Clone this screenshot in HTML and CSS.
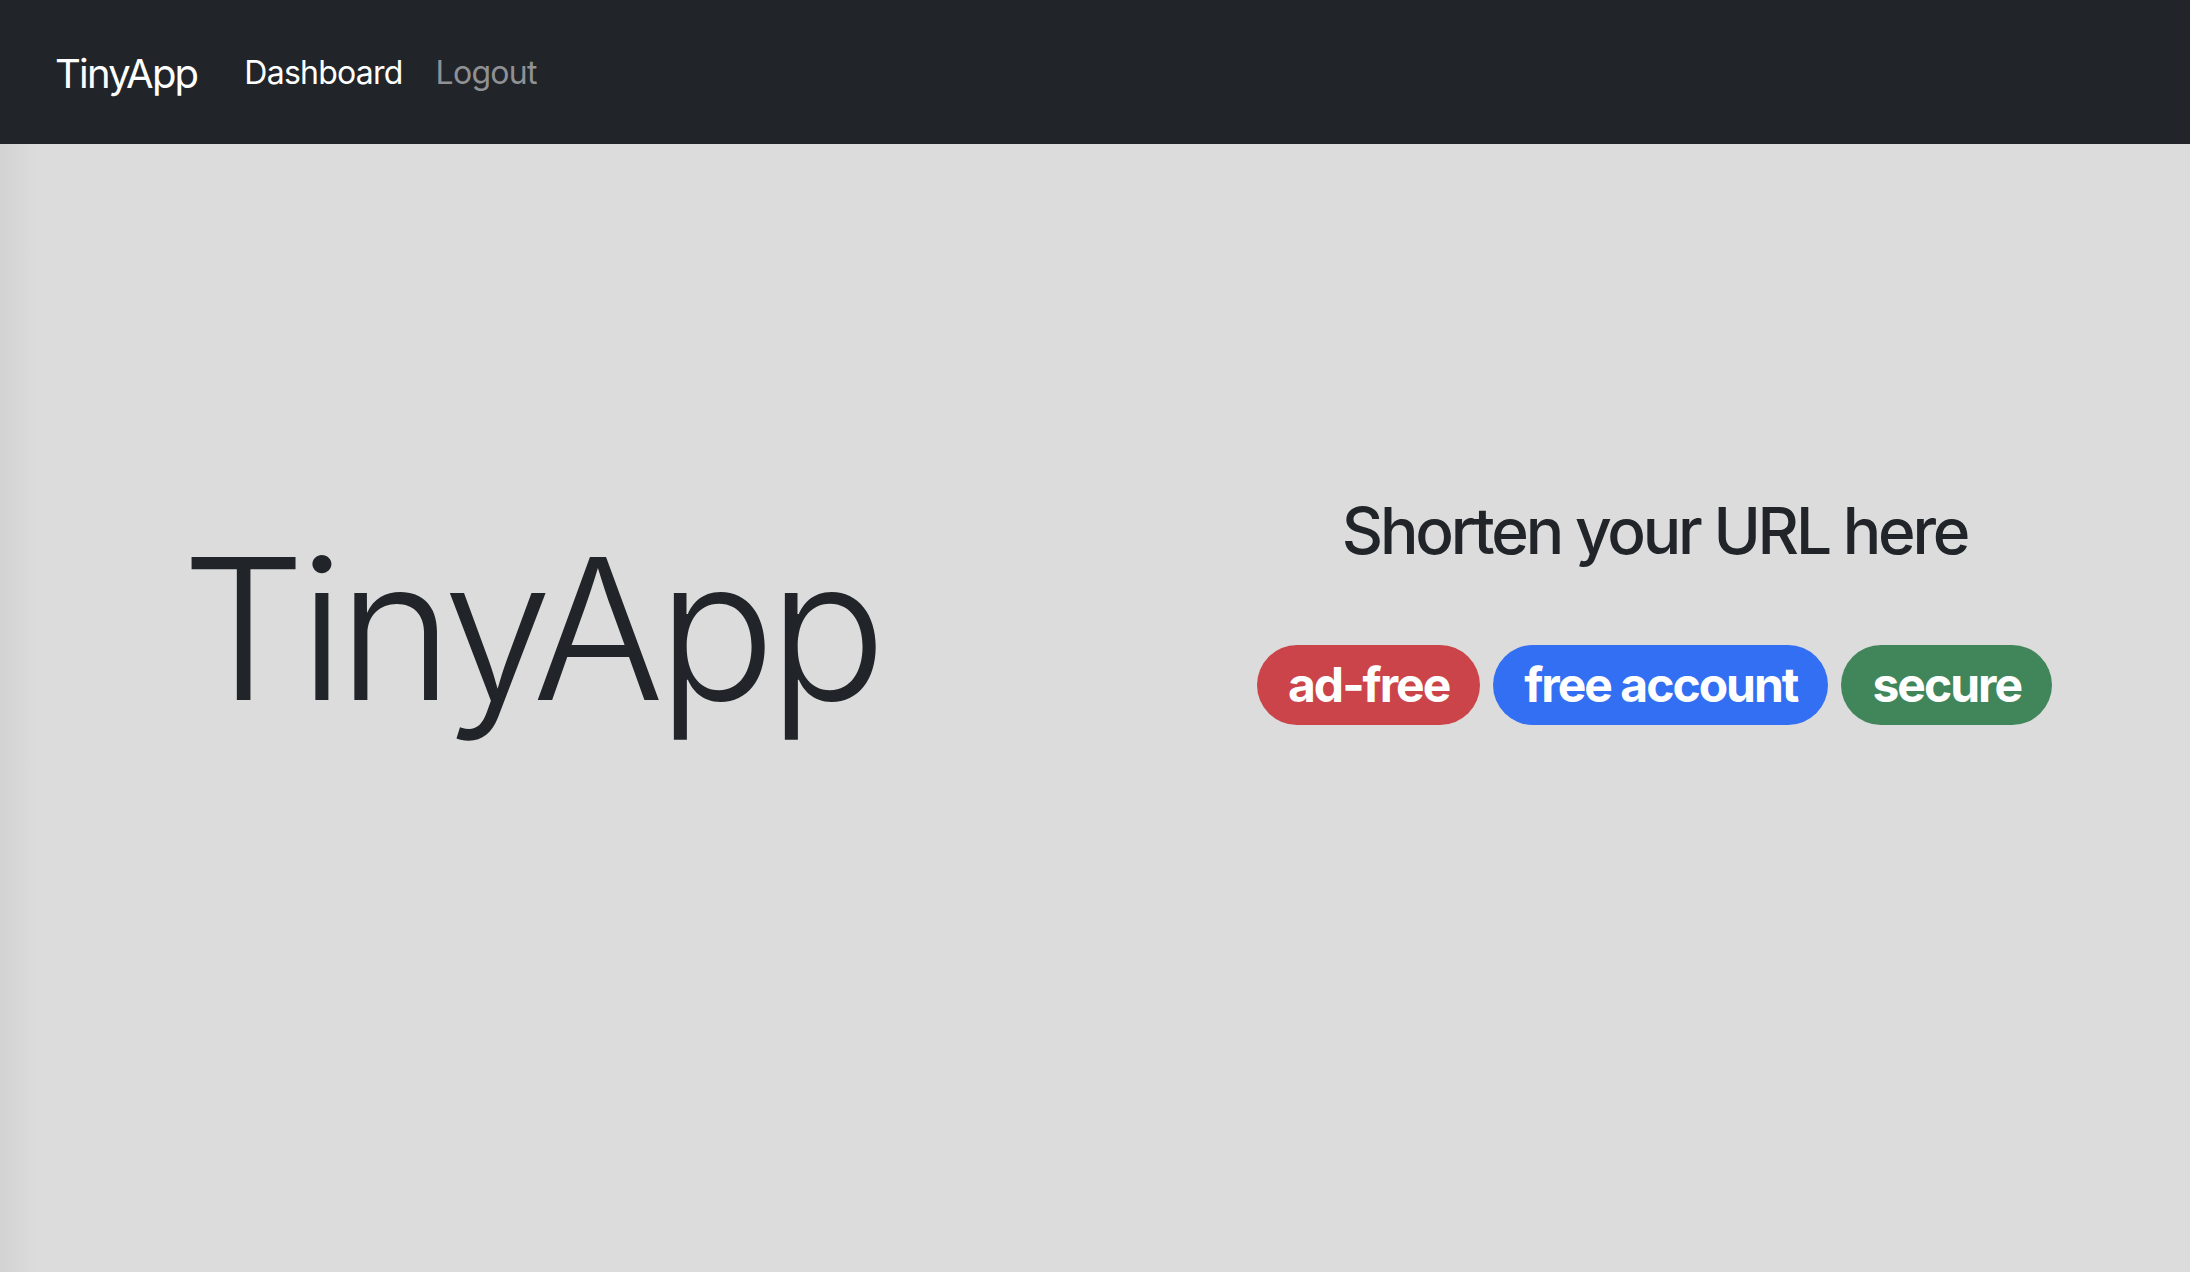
FILE: index.html
```html
<!DOCTYPE html>
<html lang="en">
<head>
<meta charset="utf-8">
<title>TinyApp</title>
<link rel="stylesheet" href="styles.css">
</head>
<body>
<nav class="navbar">
  <a class="brand" href="#">TinyApp</a>
  <div class="nav-links">
    <a class="nav-link active" href="#">Dashboard</a>
    <a class="nav-link" href="#">Logout</a>
  </div>
</nav>
<main class="hero">
  <div class="col col-left">
    <h1 class="display">TinyApp</h1>
  </div>
  <div class="col col-right">
    <h2 class="tagline">Shorten your URL here</h2>
    <div class="badges">
      <span class="badge badge-red">ad-free</span>
      <span class="badge badge-blue">free account</span>
      <span class="badge badge-green">secure</span>
    </div>
  </div>
</main>
</body>
</html>
```
FILE: styles.css
```css
* { box-sizing: border-box; }
html, body { margin: 0; padding: 0; }
body {
  font-family: Inter, "Noto Sans", "Liberation Sans", sans-serif;
  color: #212529;
  background: linear-gradient(to right, #d2d2d2 0, #dcdcdc 36px) #dcdcdc;
  min-height: 1272px;
}
.navbar {
  height: 144px;
  background: #212529;
  display: flex;
  align-items: center;
  padding-left: 55px;
  padding-top: 6px;
}
.brand {
  color: #fff;
  text-decoration: none;
  font-size: 40px;
  line-height: 1.2;
  letter-spacing: -1.8px;
  margin-right: 47px;
  padding-bottom: 2px;
}
.nav-links {
  display: flex;
  gap: 33px;
}
.nav-link {
  color: #8f9194;
  text-decoration: none;
  font-size: 32px;
  line-height: 1.5;
  letter-spacing: -0.75px;
  padding-bottom: 4px;
}
.nav-link.active { color: #fff; }
.hero {
  display: flex;
  align-items: center;
  height: 1128px;
  padding-bottom: 198px;
}
.col {
  flex: 0 0 50%;
  display: flex;
  flex-direction: column;
  align-items: center;
}
.col-left { padding-right: 34px; padding-top: 40px; }
.col-right { padding-left: 24px; }
.display {
  margin: 0;
  font-size: 196px;
  font-weight: 300;
  line-height: 1.2;
  letter-spacing: -6.8px;
}
.tagline {
  margin: 0 0 75px;
  font-size: 64px;
  font-weight: 500;
  line-height: 1.2;
  letter-spacing: -3.2px;
}
.badges {
  display: flex;
  gap: 13px;
}
.badge {
  display: inline-block;
  color: #fff;
  font-size: 48px;
  font-weight: 700;
  line-height: 1;
  padding: 16px 31px;
  border-radius: 50rem;
  letter-spacing: -2px;
}
.badge-red { background: #cb4449; }
.badge-blue { background: #336ff3; }
.badge-green { background: #41865a; }
```
